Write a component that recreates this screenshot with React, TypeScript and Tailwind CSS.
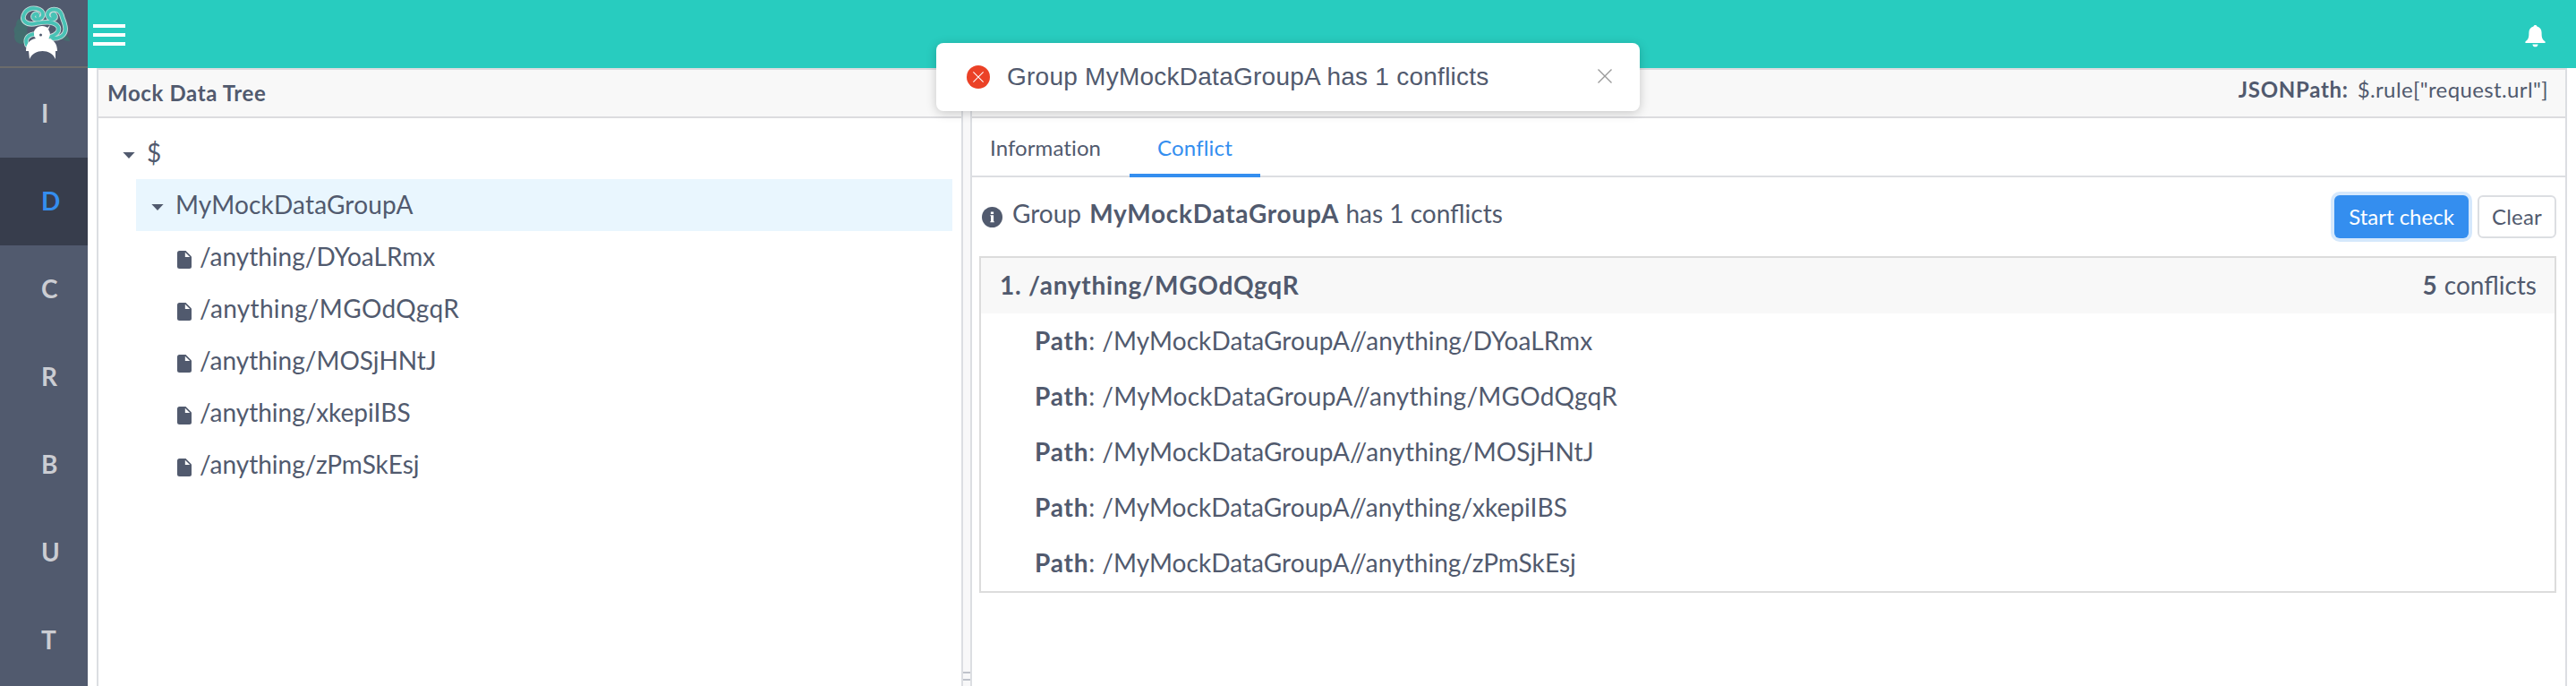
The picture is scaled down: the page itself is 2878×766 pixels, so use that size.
import type { ReactNode } from "react";

const NAV = ["I", "D", "C", "R", "B", "U", "T"];

const ITEMS = [
  { name: "DYoaLRmx", leaf: "tracking-normal", path: "tracking-[0.08px]" },
  { name: "MGOdQgqR", leaf: "tracking-[0.34px]", path: "tracking-[0.28px]" },
  { name: "MOSjHNtJ", leaf: "tracking-normal", path: "tracking-[0.08px]" },
  { name: "xkepiIBS", leaf: "tracking-normal", path: "tracking-[0.06px]" },
  { name: "zPmSkEsj", leaf: "tracking-normal", path: "tracking-[0.06px]" },
];

const TAIL_LEFT =
  "M43 20C44 17 40 16 38 20C37 25 47 25 49 19C50 11 35 8 29 16C23 25 31 31 42 28C54 26 62 26 66 32C68 37 64 41 57 43";
const TAIL_RIGHT =
  "M60 20C58 18 62 16 63 20C64 25 54 25 54 18C55 11 67 10 70 19C71 24 75 30 74 36C73 42 67 45 60 45";
const TAIL_SMALL = "M31 52C28 44 34 40 41 40";

function Logo() {
  return (
    <svg className="-ml-1" width="64" height="62" viewBox="16 8 64 62" fill="none">
      <g fill="#3f746f" opacity="0.75">
        <circle cx="26" cy="29" r="7" />
        <circle cx="24" cy="36" r="7.5" />
        <circle cx="25" cy="43" r="8" />
        <path d="M70 40q8 1 9 8q-7 0-11-4z" />
      </g>
      <g stroke="#c9dcdb" strokeWidth="5.6" strokeLinecap="round">
        <path d={TAIL_LEFT} />
        <path d={TAIL_RIGHT} />
        <path d={TAIL_SMALL} />
      </g>
      <g stroke="#48c2b5" strokeWidth="3.8" strokeLinecap="round">
        <path d={TAIL_LEFT} />
        <path d={TAIL_RIGHT} />
        <path d={TAIL_SMALL} />
      </g>
      <path
        d="M39 40C38 35 43 31 48 31C51 31 53 32 54 33L57 30L55 35C58 39 57 43 55 45C61 46 65 51 65 59L63 59L63 68C58 56 39 56 34 68L33 59L30 59C30 51 34 46 41 45C39 43 39 42 39 40Z"
        fill="#fff"
      />
      <circle cx="46.5" cy="41" r="1.5" fill="#515a6e" />
    </svg>
  );
}

function Bell() {
  return (
    <svg width="23" height="25" viewBox="0 0 23 25" fill="#fff">
      <path d="M11.5 0C12.6 0 13.3.7 13.5 1.6C16.8 2.5 18.6 5 18.6 8.6C18.6 14.5 19.3 16 22.6 18.6V20H.4V18.6C3.7 16 4.4 14.5 4.4 8.6C4.4 5 6.2 2.5 9.5 1.6C9.7.7 10.4 0 11.5 0Z" />
      <path d="M8.4 21.4H14.6C14.3 23.3 13.1 24.3 11.5 24.3S8.7 23.3 8.4 21.4Z" />
    </svg>
  );
}

function InfoIcon() {
  return (
    <svg width="23" height="23" viewBox="0 0 23 23">
      <circle cx="11.5" cy="11.5" r="11.5" fill="#515a6e" />
      <path d="M9.9 5.4H13.1V8H9.9ZM9.3 9.3H13.1V16.2H13.8V17.2H9.3V16.2H10V10.3H9.3Z" fill="#fff" />
    </svg>
  );
}

function Caret() {
  return (
    <svg className="mt-[5px]" width="14" height="7" viewBox="0 0 14 7" fill="#515a6e">
      <path d="M0.4 0h13.2L7 7z" />
    </svg>
  );
}

function FileIcon() {
  return (
    <svg className="mt-[5px]" width="16" height="20" viewBox="0 0 16 20">
      <path d="M2.5 0H9.5L16 6.5V17.5Q16 20 13.5 20H2.5Q0 20 0 17.5V2.5Q0 0 2.5 0Z" fill="#515a6e" />
      <path d="M8.8 1.8V7H14.2Z" fill="#fff" />
    </svg>
  );
}

function Cross({ size, color }: { size: number; color: string }) {
  return (
    <svg width={size} height={size} viewBox="0 0 16 16" stroke={color} strokeWidth="1.4">
      <path d="M0.5 0.5L15.5 15.5M15.5 0.5L0.5 15.5" />
    </svg>
  );
}

function PanelHeader({ children }: { children?: ReactNode }) {
  return (
    <div className="flex h-14 shrink-0 items-center border-y-2 border-[#dcdcdf] bg-[#f8f8f8] text-[24px]">
      {children}
    </div>
  );
}

export default function App() {
  return (
    <div className="relative flex h-[766px] w-[2878px] overflow-hidden bg-white font-['Lato',sans-serif] text-[28px] leading-none text-[#515a6e]">
      <aside className="flex w-[98px] shrink-0 flex-col bg-[#515a6e]">
        <div className="flex h-[76px] shrink-0 items-center justify-center border-b-2 border-[#6b6b6b]">
          <Logo />
        </div>
        <nav className="flex flex-col pt-0.5">
          {NAV.map((n) => (
            <div
              key={n}
              className={
                n === "D"
                  ? "flex h-[98px] shrink-0 items-center bg-[#373d4c] pb-[3px] pl-[46px] font-bold text-[#348eef]"
                  : "flex h-[98px] shrink-0 items-center pb-[3px] pl-[46px] font-bold text-[#cbcdd3]"
              }
            >
              {n}
            </div>
          ))}
        </nav>
      </aside>

      <div className="flex min-w-0 grow flex-col">
        <header className="flex h-[76px] shrink-0 items-center justify-between bg-[#28ccbf] pr-[34px] pl-1.5">
          <div className="flex flex-col gap-1.5 pt-0.5">
            <div className="h-1 w-9 bg-white" />
            <div className="h-1 w-9 bg-white" />
            <div className="h-1 w-9 bg-white" />
          </div>
          <div className="pt-[5px]">
            <Bell />
          </div>
        </header>

        <main className="mr-[10px] ml-[10px] flex grow border-x-2 border-[#dcdee2]">
          <section className="flex w-[964px] shrink-0 flex-col">
            <PanelHeader>
              <span className="pb-px pl-[10px] font-bold tracking-[0.62px]">Mock Data Tree</span>
            </PanelHeader>
            <div className="flex flex-col pt-[10px] pr-[10px]">
              <div className="flex h-[58px] items-center pl-[27px]">
                <Caret />
                <span className="pb-[3px] pl-[13px]">$</span>
              </div>
              <div className="ml-[42px] flex h-[58px] items-center bg-[#e9f6fe] pl-[17px]">
                <Caret />
                <span className="ml-[13px] pb-[3px] tracking-[0.18px]">MyMockDataGroupA</span>
              </div>
              {ITEMS.map((i) => (
                <div key={i.name} className="flex h-[58px] items-center pl-[88px]">
                  <FileIcon />
                  <span className={`ml-[9px] pb-[3px] ${i.leaf}`}>/anything/{i.name}</span>
                </div>
              ))}
            </div>
          </section>

          <div className="flex w-3 shrink-0 flex-col justify-end gap-1.5 border-x-2 border-[#dcdee2] bg-[#f8f8f9] pb-1.5">
            <div className="h-0.5 bg-[#bfc3cb]" />
            <div className="h-0.5 bg-[#bfc3cb]" />
          </div>

          <section className="flex min-w-0 grow flex-col">
            <PanelHeader>
              <div className="ml-auto flex pr-[19px] pb-[9px]">
                <b className="tracking-[0.7px]">JSONPath:</b>
                <span className="ml-2.5 tracking-[0.38px]">$.rule["request.url"]</span>
              </div>
            </PanelHeader>
            <div className="flex h-[66px] shrink-0 border-b-2 border-[#dcdee2] text-[24px]">
              <div className="flex w-[176px] items-center pt-0.5 pl-5 tracking-[0.1px]">Information</div>
              <div className="-mb-0.5 flex w-[146px] items-center justify-center border-b-4 border-[#348eef] pt-1 tracking-[0.2px] text-[#348eef]">
                Conflict
              </div>
            </div>
            <div className="flex h-[88px] shrink-0 items-center pr-[10px] pl-[11px]">
              <InfoIcon />
              <div className="flex pb-[9px] pl-[11px] whitespace-pre">
                <span>Group </span>
                <b className="ml-0.5 tracking-[0.72px]">MyMockDataGroupA</b>
                <span> has 1 conflicts</span>
              </div>
              <button className="ml-auto h-12 w-[150px] rounded-md bg-[#348eef] pb-px text-[24px] text-white shadow-[0_0_0_4px_rgba(45,140,240,0.2)]">
                Start check
              </button>
              <button className="ml-[10px] h-12 w-[88px] rounded-md border-2 border-[#dcdee2] pb-px text-[24px] tracking-[0.2px]">
                Clear
              </button>
            </div>
            <div className="mr-[10px] ml-2 flex flex-col border-2 border-[#dcdcdc]">
              <div className="flex h-[62px] items-center justify-between bg-[#f8f8f8] pr-5 pb-[3px] pl-[21px]">
                <b className="tracking-[0.77px]">1. /anything/MGOdQgqR</b>
                <div className="flex">
                  <b>5</b>
                  <span className="ml-2">conflicts</span>
                </div>
              </div>
              {ITEMS.map((i) => (
                <div key={i.name} className="flex h-[62px] items-center pb-[3px] pl-[60px]">
                  <b className="tracking-[0.8px]">Path</b>
                  <span>:</span>
                  <span className={`ml-2 ${i.path}`}>/MyMockDataGroupA//anything/{i.name}</span>
                </div>
              ))}
            </div>
          </section>
        </main>
      </div>

      <div className="absolute top-12 left-[1046px] flex h-[76px] w-[786px] items-center rounded-lg bg-white pr-[31px] pl-[34px] font-['Liberation_Sans',Arial,sans-serif] shadow-[0_2px_12px_rgba(0,0,0,0.2)]">
        <div className="flex h-[26px] w-[26px] items-center justify-center rounded-full bg-[#eb4126]">
          <Cross size={12} color="#fff" />
        </div>
        <span className="ml-[19px] tracking-[0.25px]">Group MyMockDataGroupA has 1 conflicts</span>
        <div className="ml-auto pb-0.5">
          <Cross size={16} color="#999" />
        </div>
      </div>
    </div>
  );
}
